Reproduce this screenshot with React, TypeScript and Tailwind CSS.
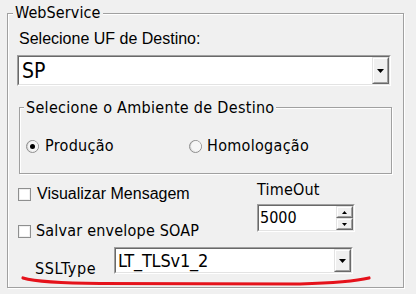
const TAH = "font-['DejaVu_Sans_Condensed','DejaVu_Sans',sans-serif]";
const MSS = "font-['Liberation_Sans',Arial,sans-serif]";

function Arrow({ dir = "down", w = 7 }: { dir?: "up" | "down"; w?: number }) {
  const h = Math.ceil(w / 2);
  const pts = dir === "down" ? `0,0 ${w},0 ${w / 2},${h}` : `0,${h} ${w},${h} ${w / 2},0`;
  return (
    <svg width={w} height={h} viewBox={`0 0 ${w} ${h}`}>
      <polygon points={pts} fill="#000" />
    </svg>
  );
}

function Sunken({ className, children }: { className: string; children: React.ReactNode }) {
  return (
    <div className={`${className} border border-t-[#a0a0a0] border-l-[#a0a0a0] border-b-white border-r-white`}>
      <div className="w-full h-full border border-t-[#696969] border-l-[#696969] border-b-[#e3e3e3] border-r-[#e3e3e3] bg-white flex">
        {children}
      </div>
    </div>
  );
}

function RaisedBtn({ className, children }: { className: string; children: React.ReactNode }) {
  return (
    <div className={`${className} border border-t-[#e3e3e3] border-l-[#e3e3e3] border-b-[#696969] border-r-[#696969]`}>
      <div className="w-full h-full border border-t-white border-l-white border-b-[#a0a0a0] border-r-[#a0a0a0] bg-[#f0f0f0] flex items-center justify-center">
        {children}
      </div>
    </div>
  );
}

function Radio({ checked }: { checked?: boolean }) {
  return (
    <div className="w-[13px] h-[13px] rounded-full border border-[#8e8e8e] bg-[linear-gradient(135deg,#c8c8c8,#ffffff)] flex items-center justify-center shrink-0">
      <div className="w-[10px] h-[10px] rounded-full bg-[#f6f6f6] flex items-center justify-center">
        {checked && <div className="w-[5px] h-[5px] rounded-full bg-black" />}
      </div>
    </div>
  );
}

function Check() {
  return (
    <div className="w-[13px] h-[13px] border border-[#8e8f8f] bg-white shadow-[inset_0_0_0_1px_#f0f0f0] shrink-0" />
  );
}

export default function App() {
  return (
    <div className="relative w-[416px] h-[294px] bg-[#f0f0f0] overflow-hidden pt-[13px] pl-[7px] text-black">
      <div className="relative w-[397px] h-[275px] border border-[#a0a0a0] shadow-[inset_1px_1px_0_#fff,1px_1px_0_#fff]">
        <span className={`absolute left-[5px] top-[-11px] px-[2px] bg-[#f0f0f0] text-[16px] leading-[20px] tracking-[0.1px] ${TAH}`}>
          WebService
        </span>

        <div className="pl-[9px] pt-[16px]">
          <div className={`ml-[2px] h-[18px] leading-[18px] text-[16px] ${MSS}`}>Selecione UF de Destino:</div>

          <Sunken className="mt-[7px] w-[374px] h-[31px]">
            <div className={`flex-1 flex items-center pl-[3px] text-[21px] leading-[24px] ${TAH}`}>SP</div>
            <RaisedBtn className="w-[17px] h-full">
              <Arrow />
            </RaisedBtn>
          </Sunken>

          <div className="relative mt-[21px] ml-[2px] w-[373px] h-[67px] border border-[#a0a0a0] shadow-[inset_1px_1px_0_#fff,1px_1px_0_#fff]">
            <span className={`absolute left-[4px] top-[-10px] px-[2px] bg-[#f0f0f0] text-[16px] leading-[20px] tracking-[0.3px] ${TAH}`}>
              Selecione o Ambiente de Destino
            </span>
            <div className={`flex items-center pt-[31px] pl-[6px] text-[16px] tracking-[0.3px] ${TAH}`}>
              <div className="flex items-center w-[163px] h-[14px]">
                <Radio checked />
                <span className="ml-[6px] leading-[18px]">Produção</span>
              </div>
              <div className="flex items-center h-[14px]">
                <Radio />
                <span className="ml-[5px] leading-[18px]">Homologação</span>
              </div>
            </div>
          </div>
        </div>

        <div className="flex">
          <div className="w-[249px] pl-[10px]">
            <div className={`mt-[12px] h-[16px] flex items-center text-[16px] ${MSS}`}>
              <Check />
              <span className="ml-[6px] leading-[18px]">Visualizar Mensagem</span>
            </div>
            <div className={`mt-[21px] h-[16px] flex items-center text-[16px] tracking-[0.2px] ${TAH}`}>
              <Check />
              <span className="ml-[5px] leading-[18px]">Salvar envelope SOAP</span>
            </div>
          </div>
          <div>
            <div className={`mt-[7px] h-[18px] leading-[18px] text-[16px] tracking-[0.2px] ${TAH}`}>TimeOut</div>
            <Sunken className="mt-[5px] w-[98px] h-[28px]">
              <div className={`flex-1 flex items-center pl-[1px] text-[16px] leading-[18px] ${TAH}`}>5000</div>
              <div className="w-[17px] h-full flex flex-col">
                <RaisedBtn className="w-full h-[13px]">
                  <Arrow dir="up" w={5} />
                </RaisedBtn>
                <RaisedBtn className="w-full h-[13px]">
                  <Arrow dir="down" w={5} />
                </RaisedBtn>
              </div>
            </Sunken>
          </div>
        </div>

        <div className="flex items-start mt-[8px] pl-[27px]">
          <div className={`w-[79px] mt-[13px] h-[18px] leading-[18px] text-[16px] tracking-[0.6px] ${TAH}`}>SSLType</div>
          <Sunken className="w-[239px] h-[27px]">
            <div className={`flex-1 flex items-center pl-[2px] text-[18px] leading-[22px] tracking-[-0.2px] ${TAH}`}>LT_TLSv1_2</div>
            <RaisedBtn className="w-[17px] h-full">
              <Arrow />
            </RaisedBtn>
          </Sunken>
        </div>
      </div>

      <svg className="absolute left-0 top-0 pointer-events-none" width="416" height="294" viewBox="0 0 416 294">
        <path
          d="M23 278 Q 40 283 100 283.5 L 300 284 Q 350 282.5 369 278"
          fill="none"
          stroke="#e5121b"
          strokeWidth="3.2"
          strokeLinecap="round"
        />
      </svg>
    </div>
  );
}
